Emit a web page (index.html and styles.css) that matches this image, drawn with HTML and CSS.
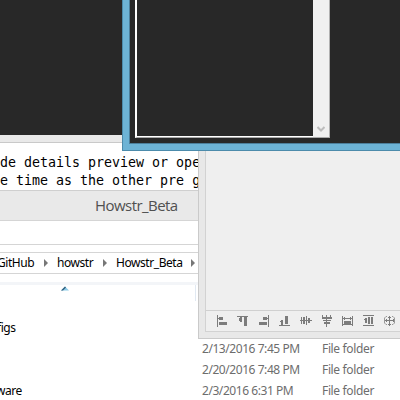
FILE: index.html
```html
<!DOCTYPE html>
<html lang="en">
<head>
<meta charset="utf-8">
<title>Desktop</title>
<link rel="stylesheet" href="styles.css">
</head>
<body>
<main class="desktop">
  <section class="window editor">
    <div class="canvas"></div>
    <div class="strip"></div>
    <pre class="notes"><span>de details preview or ope</span>
<span>e time as the other pre g</span></pre>
  </section>

  <section class="window explorer">
    <header class="title"><span>Howstr_Beta</span></header>
    <div class="ribbon"></div>
    <nav class="address">
      <span class="github">GitHub</span><i class="chevron"></i>
      <span class="howstr">howstr</span><i class="chevron"></i>
      <span class="beta">Howstr_Beta</span><i class="chevron"></i>
    </nav>
    <div class="spacer"></div>
    <div class="files">
      <div class="columns"><svg class="sort" width="8" height="5" viewBox="0 0 8 5"><path d="M0 4.5 4 .5 8 4.5Z" fill="#8ccbe8"/><path d="M0 4.5 4 .5 5 1.5 2 4.5Z" fill="#315f7d"/></svg></div>
      <div class="row"><span class="name figs">figs</span><span></span><span></span></div>
      <div class="row"><span></span><span class="date">2/13/2016 7:45 PM</span><span class="kind">File folder</span></div>
      <div class="row"><span></span><span class="date">2/20/2016 7:48 PM</span><span class="kind">File folder</span></div>
      <div class="row"><span class="name ware">ware</span><span class="date">2/3/2016 6:31 PM</span><span class="kind">File folder</span></div>
    </div>
  </section>

  <section class="window panel">
    <div class="panel-body">
      <div class="panel-content"></div>
      <div class="tools">
        <svg viewBox="0 0 12 12"><path d="M1 0h1v12H1zM2 3h4v1H2zM3 2h4v3H3zM3 7h8v3H3z"/></svg>
        <svg viewBox="0 0 12 12"><path d="M0 1h11v1H0zM3 2h2v5H3zM2 3h1v3H2zM7 2h3v9H7z"/></svg>
        <svg viewBox="0 0 12 12"><path d="M10 0h1v12h-1zM5 2h4v3H5zM8 3h2v1H8zM1 7h8v3H1z"/></svg>
        <svg viewBox="0 0 12 12"><path d="M0 10h11v1H0zM2 5h2v5H2zM1 6h1v1H1zM6 1h3v8H6z"/></svg>
        <svg viewBox="0 0 12 12"><path d="M0 5h1v1H0zM2 5h10v1H2zM1 2h1v7H1zM3 2h2v7H3zM6 1h1v9H6zM8 3h2v5H8z"/></svg>
        <svg viewBox="0 0 12 12"><path d="M5 0h1v12H5zM1 2h10v2H1zM2 5h8v1H2zM3 7h6v2H3zM1 0h1v2H1zM9 0h1v2H9z"/></svg>
        <svg viewBox="0 0 12 12"><path d="M0 1h1v10H0zM10 1h1v10h-1zM1 3h9v1H1zM2 2h1v3H2zM8 2h1v3H8zM2 6h7v3H2zM1 9h9v1H1z"/></svg>
        <svg viewBox="0 0 12 12"><path d="M0 0h11v1H0zM0 10h11v1H0zM2 3h2v5H2zM1 4h1v1H1zM5 2h2v7H5zM8 2h2v7H8z"/></svg>
        <svg viewBox="0 0 12 12"><path d="M5 1h1v10H5zM1 5h10v1H1zM4 2h3v1H4zM4 9h3v1H4zM2 4h1v3H2zM9 4h1v3H9z"/><path class="ring" d="M3 1.5H2L.5 3v5L2 9.5h1M8 1.5h1L10.5 3v5L9 9.5H8"/></svg>
      </div>
    </div>
  </section>

  <section class="window app">
    <div class="app-body">
      <div class="list">
        <div class="list-content"></div>
        <div class="scrollbar"><svg width="8" height="6" viewBox="0 0 8 6"><path d="M.5 1 4 4.5 7.5 1" fill="none" stroke="#bdbdbd" stroke-width="2"/></svg></div>
      </div>
    </div>
  </section>
</main>
</body>
</html>
```
FILE: styles.css
```css
* { box-sizing: border-box; }
body { margin: 0; }
.desktop { position: relative; width: 400px; height: 400px; overflow: hidden; background: #fff; font-family: "Noto Sans", sans-serif; font-size: 12px; letter-spacing: -0.44px; color: #000; }
.window { position: absolute; }
.desktop span { white-space: nowrap; }

.editor { left: 0; top: 0; width: 400px; height: 190px; background: #fff; }
.canvas { height: 135px; background: #282828; }
.strip { height: 8px; background: #e9e9e9; border-bottom: 1px solid #c9c9c9; }
.notes { margin: 11px 0 0; font: 13.3px/18px "DejaVu Sans Mono", monospace; letter-spacing: 0; }

.explorer { left: 0; top: 190px; width: 400px; height: 210px; background: #fff; border-top: 1px solid #cfcfcf; }
.title { height: 30px; background: #e9e9e9; border-bottom: 1px solid #d5d5d5; padding-left: 95px; font: 400 15px/29px "Open Sans", sans-serif; letter-spacing: -0.55px; color: #505050; }
.ribbon { height: 24px; border-bottom: 1px solid #d5d5d5; }
.address { display: flex; align-items: center; height: 22px; margin-top: 7px; border: solid #d5d5d5; border-width: 1px 0; line-height: 20px; }
.chevron { width: 4px; height: 8px; background: #777; clip-path: polygon(0 0, 100% 50%, 0 100%); }
.github { width: 44px; margin-left: -3px; }
.github + .chevron { margin-left: 3px; }
.howstr { width: 46px; padding-left: 9px; }
.howstr + .chevron { margin-left: 9px; }
.beta { width: 76px; padding-left: 9px; }
.beta + .chevron { margin-left: 8px; }
.spacer { height: 8px; }
.files { border-top: 3px solid #f3f5f8; }
.columns { width: 196px; height: 16px; margin-bottom: 16px; padding-top: 1px; border-right: 1px solid #e1e9f2; }
.sort { display: block; margin-left: 61px; }
.row { display: grid; grid-template-columns: 202px 120px 78px; height: 21px; line-height: 21px; }
.name { margin-left: -4px; }
.figs { margin-left: -3px; }
.date, .kind { color: #6d6d6d; }
.kind { letter-spacing: -0.35px; }

.panel { left: 198px; top: 100px; width: 210px; height: 239px; padding: 6px; background: #e8e8e8; border: 1px solid #cacaca; }
.panel-body { display: flex; flex-direction: column; height: 225px; background: #efefef; border: 1px solid #d2d2d2; }
.panel-content { flex: 1; }
.tools { display: flex; gap: 9px; height: 21px; padding: 4px 0 0 10px; border-top: 1px solid #d0d0d0; }
.tools svg { width: 12px; height: 12px; flex: none; fill: #7c7c7c; }
.tools .ring { fill: none; stroke: #999; }

.app { left: 122px; top: -10px; width: 300px; height: 161px; padding: 0 0 6px 6px; background: #6db3d5; border: 1px solid #4c8bab; }
.app-body { height: 153px; padding-left: 5px; background: #282828; border: solid #4c7f9b; border-width: 0 0 1px 1px; }
.list { display: flex; width: 195px; height: 147px; border-left: 2px solid #fff; border-bottom: 1px solid #a9a9a9; }
.list-content { flex: 1; border-bottom: 1px solid #fff; }
.scrollbar { display: flex; width: 17px; align-items: flex-end; padding: 0 0 5px 4px; background: #f0f0f0; border-right: 1px solid #b0b0b0; }
```
